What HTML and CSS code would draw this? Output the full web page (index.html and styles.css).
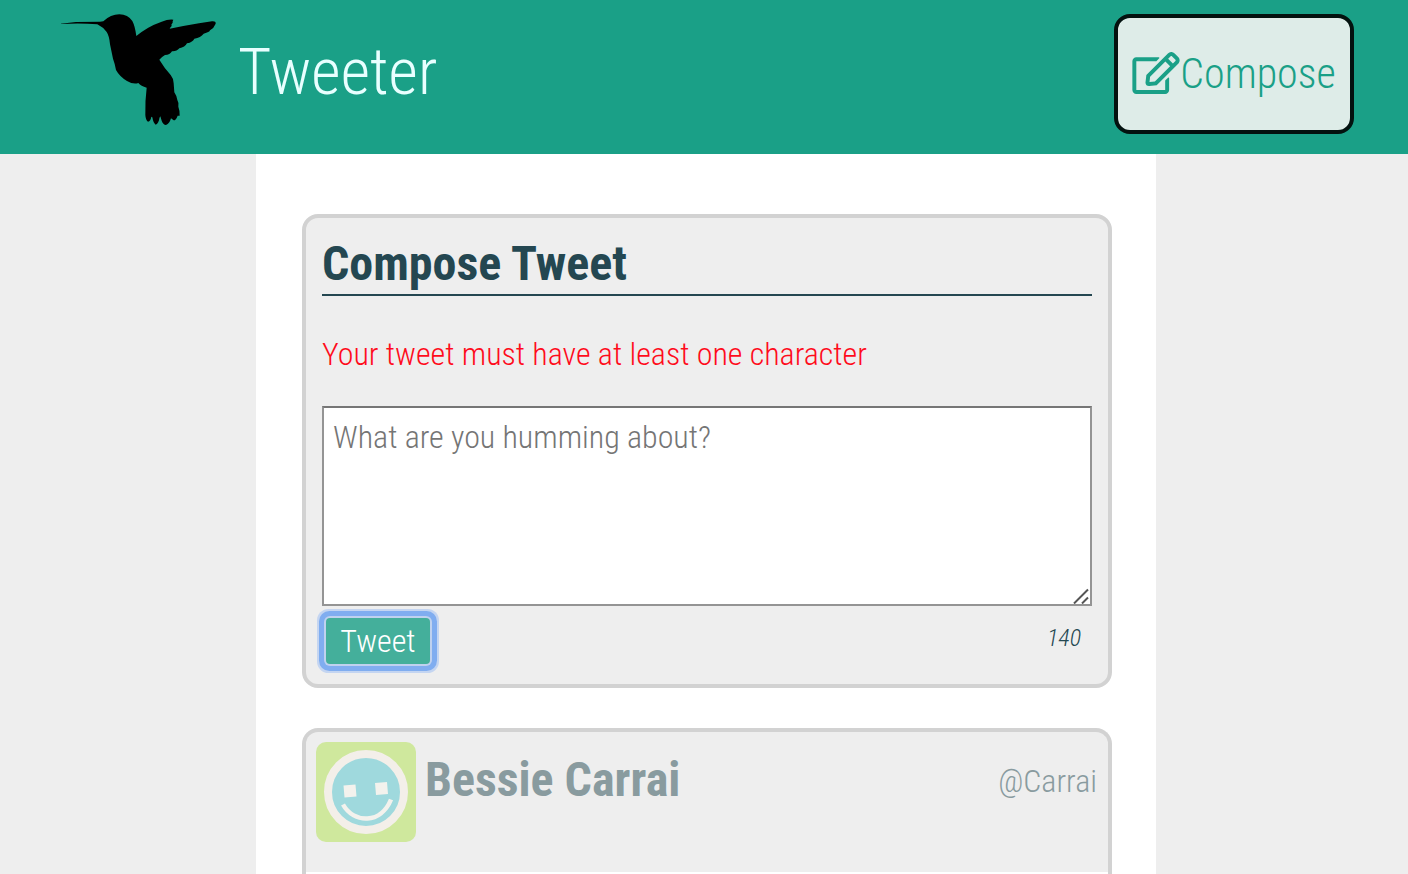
FILE: index.html
```html
<!DOCTYPE html>
<html lang="en">
<head>
<meta charset="utf-8">
<meta name="viewport" content="width=device-width, initial-scale=1">
<title>Tweeter</title>
<link rel="stylesheet" href="styles.css">
</head>
<body>
<header class="nav">
  <a class="brand" href="#">
    <svg class="bird" viewBox="0 0 540 405" aria-hidden="true"><path d="M32 71 L78 66 L150 65 L160 64 Q182 43 208 43 Q234 44 247 63 Q255 78 259 108 Q292 80 335 65 Q355 57 370 59 Q367 64 368 68 Q362 73 365 78 Q361 82 359 86 Q400 78 447 70 L486 64 Q498 63 497 71 Q492 84 480 91 Q479 97 461 101 Q452 113 433 116 Q429 126 411 130 Q405 142 388 145 Q380 155 366 154 Q360 165 345 165 Q336 170 328 179 Q345 207 362 225 Q371 236 371 250 L373 277 Q380 287 382 300 Q387 308 385 320 Q390 333 389 347 L383 347 Q378 361 371 361 L363 355 Q359 370 348 375 Q339 374 335 362 L331 349 Q328 352 327 361 Q322 374 317 374 Q310 370 307 352 L304 350 Q302 363 294 365 Q287 361 286 345 Q285 302 290 263 Q273 259 265 249 Q250 254 231 243 Q209 230 198 210 Q195 192 189 176 L180 133 Q178 108 170 96 Q160 82 142 73 Q92 69 34 72 Z"/></svg>
    <span class="brand-name">Tweeter</span>
  </a>
  <button class="compose" type="button">
    <svg class="compose-icon" viewBox="0 0 576 512" aria-hidden="true"><path d="M402.3 344.9l32-32c5-5 13.7-1.500 13.700 5.700V464c0 26.500-21.500 48-48 48H48c-26.500 0-48-21.500-48-48V112c0-26.500 21.500-48 48-48h273.500c7.100 0 10.700 8.600 5.700 13.700l-32 32c-1.500 1.500-3.500 2.300-5.700 2.300H48v352h352V350.500c0-2.100.8-4.100 2.300-5.600zm156.600-201.800L296.300 405.700l-90.400 10c-26.200 2.900-48.500-19.200-45.600-45.600l10-90.400L432.900 17.100c22.900-22.900 59.900-22.900 82.700 0l43.200 43.200c22.900 22.900 22.900 60 .1 82.800zM460.100 174L402 115.900 216.200 301.800l-7.300 65.300 65.300-7.300L460.100 174zm64.800-79.700l-43.200-43.200c-4.100-4.100-10.800-4.100-14.800 0L436 82l58.100 58.100 30.900-30.900c4-4.200 4-10.800-.1-14.900z"/></svg>
    <span>Compose</span>
  </button>
</header>
<main class="container">
  <section class="card new-tweet">
    <h2 class="card-title">Compose Tweet</h2>
    <p class="error" role="alert">Your tweet must have at least one character</p>
    <form class="tweet-form">
      <div class="text-wrap">
        <textarea class="tweet-text" name="text" aria-label="Tweet text" placeholder="What are you humming about?"></textarea>
        <svg class="grip" viewBox="0 0 16 16" aria-hidden="true"><path d="M1 15.500L15 1.500M9 15.500L15 9.500" fill="none" stroke="#555" stroke-width="2"/></svg>
      </div>
      <div class="form-footer">
        <button class="submit" type="button">Tweet</button>
        <output class="counter">140</output>
      </div>
    </form>
  </section>
  <article class="card tweet">
    <header class="tweet-header">
      <svg class="avatar" viewBox="0 0 100 100" role="img" aria-label="Bessie Carrai avatar">
        <rect width="100" height="100" fill="#cfe89d"/>
        <circle cx="50" cy="50" r="38" fill="#9fd9dd" stroke="#f3efe9" stroke-width="8"/>
        <path d="M27.500 43.500l12-1 1 12-12 1zM59 41l12-1 1 12-12 1z" fill="#f3f2ed"/>
        <path d="M27 62.500C38 82 65 82 75 57.500" fill="none" stroke="#f3f2ed" stroke-width="4.500"/>
      </svg>
      <h2 class="author">Bessie Carrai</h2>
      <span class="handle">@Carrai</span>
    </header>
    <div class="tweet-body"></div>
  </article>
</main>
</body>
</html>
```
FILE: styles.css
```css
* {
  box-sizing: border-box;
}

body {
  display: flex;
  flex-direction: column;
  min-height: 100vh;
  margin: 0;
  background: #eee;
  color: #244751;
  font-family: "Roboto Condensed", Roboto, sans-serif;
  font-size: 32px;
  font-weight: 300;
  line-height: 40px;
}

button,
textarea {
  font: inherit;
}

.nav {
  display: flex;
  justify-content: space-between;
  align-items: flex-start;
  padding: 0 54px 19px 50px;
  background: #1aa087;
}

.brand {
  display: flex;
  align-items: center;
  gap: 8px;
  color: #e8ffff;
  text-decoration: none;
}

.bird {
  width: 180px;
  height: 135px;
  fill: #000;
}

.brand-name {
  padding-top: 10px;
  font-size: 64px;
  line-height: 80px;
}

.compose {
  display: flex;
  align-items: center;
  justify-content: center;
  width: 240px;
  height: 120px;
  margin-top: 14px;
  padding: 0;
  border: 4px solid #03120f;
  border-radius: 16px;
  background: #deece8;
  color: #1aa087;
  font-size: 42px;
}

.compose-icon {
  width: 48px;
  height: 42px;
  margin-bottom: 2px;
  fill: currentColor;
}

.container {
  display: flex;
  flex: 1 0 auto;
  flex-direction: column;
  gap: 40px;
  margin: 0 252px 0 256px;
  padding: 60px 44px 0 46px;
  background: #fff;
}

.card {
  border: 4px solid #d2d2d2;
  border-radius: 16px;
  background: #eee;
}

.new-tweet {
  padding: 16px 16px 12px;
}

.card-title {
  margin: 0;
  border-bottom: 2px solid #244751;
  font-size: 48px;
  font-weight: 700;
  line-height: 60px;
}

.error {
  margin: 38px 0 32px;
  color: #ff0b1b;
}

.text-wrap {
  position: relative;
}

.tweet-text {
  display: block;
  width: 100%;
  height: 200px;
  padding: 9px;
  border: 2px solid #949494;
  border-top-color: #767676;
  border-radius: 0;
  background: #fff;
  resize: vertical;
}

.tweet-text::placeholder {
  color: #757575;
  opacity: 1;
}

.tweet-text::-webkit-resizer {
  background: transparent;
}

.grip {
  position: absolute;
  right: 3px;
  bottom: 2px;
  width: 16px;
  height: 16px;
  pointer-events: none;
}

.form-footer {
  display: flex;
  justify-content: space-between;
  align-items: flex-start;
  padding: 12px 11px 8px 4px;
}

.submit {
  width: 104px;
  height: 46px;
  padding: 0;
  border: 0;
  border-radius: 4px;
  background: #44af9b;
  box-shadow: 0 0 0 2px #bfd1ef, 0 0 0 7px #80adf0, 0 0 0 9px #c4d5f1;
  color: #fff;
}

.counter {
  font-size: 24px;
  font-style: italic;
}

.tweet {
  display: flex;
  flex: 1 0 auto;
  flex-direction: column;
  border-bottom: 0;
  border-bottom-left-radius: 0;
  border-bottom-right-radius: 0;
}

.tweet-header {
  display: flex;
  align-items: flex-start;
  padding: 10px 11px 30px 10px;
  color: #899b9f;
}

.avatar {
  width: 100px;
  height: 100px;
  border-radius: 10px;
}

.author {
  margin: 8px auto 0 9px;
  font-size: 48px;
  font-weight: 700;
  line-height: 60px;
}

.handle {
  margin-top: 19px;
}

.tweet-body {
  flex: 1;
  background: #fff;
}
```
